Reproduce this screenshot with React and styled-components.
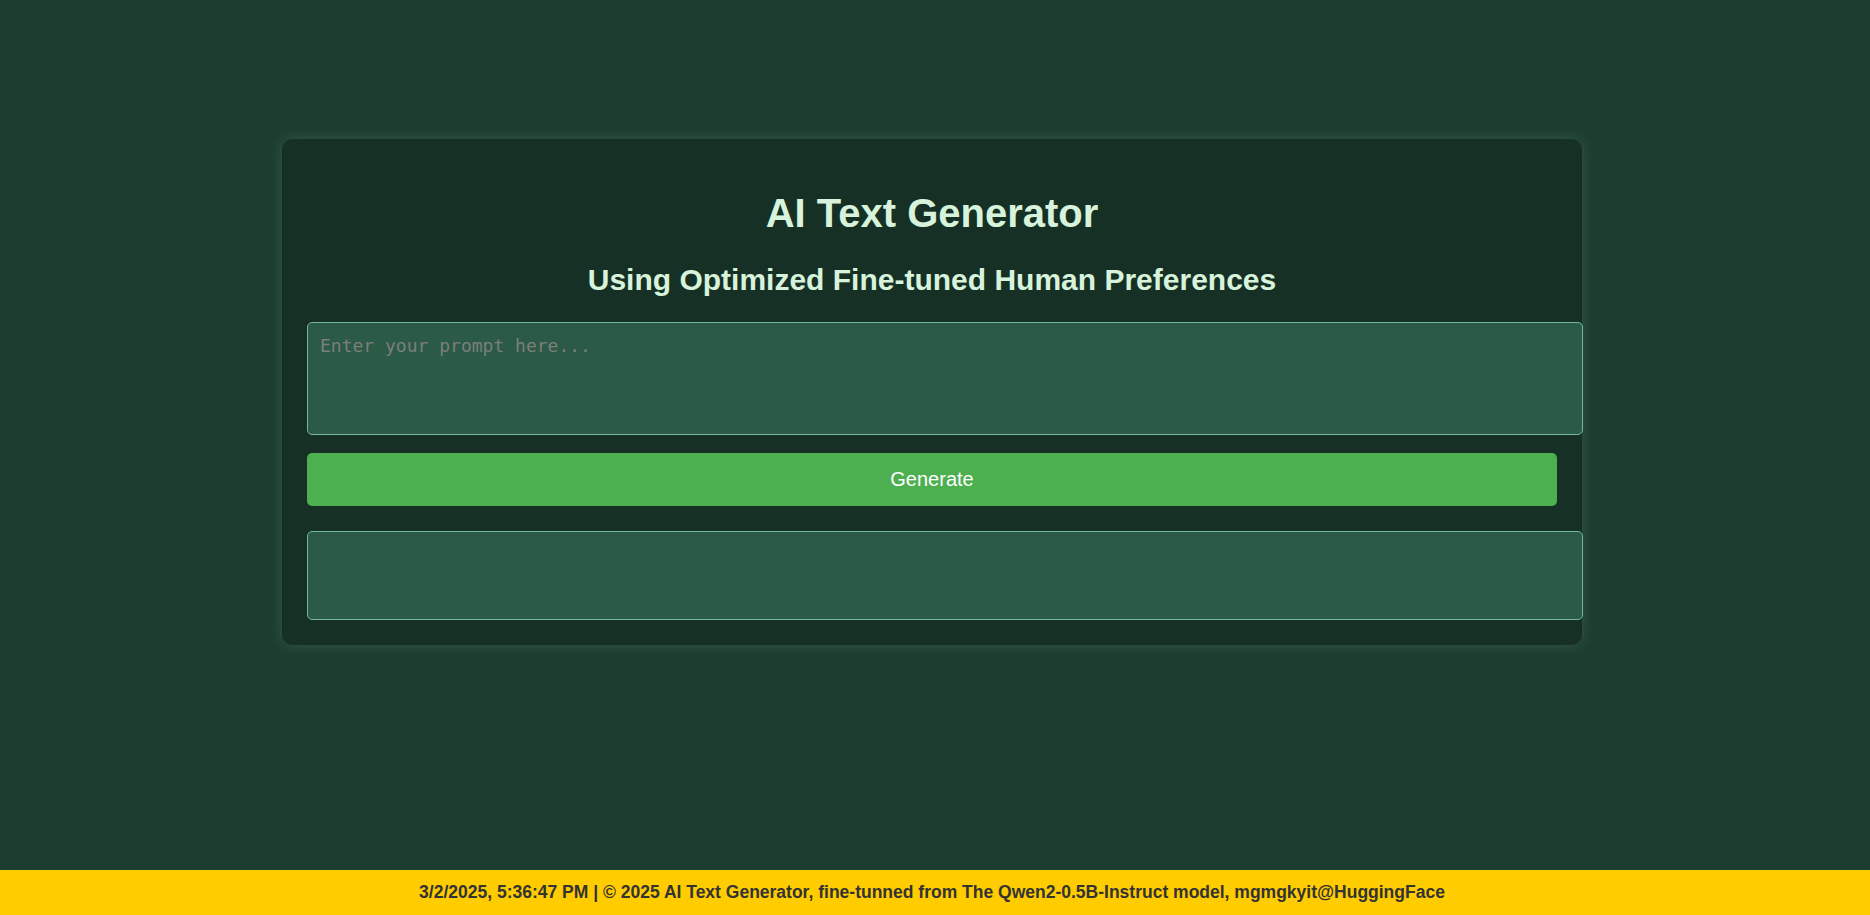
import { useState } from "react";
import styled, { createGlobalStyle } from "styled-components";

const GlobalStyle = createGlobalStyle`
  body {
    margin: 0;
    background-color: #1c3d30;
    font-family: "Liberation Sans", Arial, sans-serif;
  }
`;

const Page = styled.div`
  min-height: 100vh;
  display: flex;
  flex-direction: column;
`;

const Main = styled.main`
  flex: 1;
  padding: 139px 6px 0 0;
`;

const Card = styled.div`
  width: 1250px;
  margin: 0 auto;
  padding: 25px;
  background-color: #173026;
  border-radius: 10px;
  box-shadow: 0 0 14px rgba(190, 240, 210, 0.16);
`;

const Title = styled.h1`
  margin: 27px 0;
  font-size: 40px;
  font-weight: bold;
  text-align: center;
  color: #d8f3dc;
`;

const SubTitle = styled.h2`
  margin: 27px 0 25px;
  font-size: 30px;
  font-weight: bold;
  text-align: center;
  color: #d8f3dc;
`;

const PromptInput = styled.textarea`
  display: block;
  box-sizing: content-box;
  width: 100%;
  height: 87px;
  margin: 0;
  padding: 12px;
  border: 1px solid #74b89a;
  border-radius: 5px;
  background-color: #2b5a46;
  color: #d8f3dc;
  font-family: "DejaVu Sans Mono", "Liberation Mono", monospace;
  font-size: 18px;
  resize: none;
  outline: none;

  &::placeholder {
    color: #7b7f7c;
  }
`;

const GenerateButton = styled.button`
  display: block;
  width: 100%;
  margin-top: 18px;
  padding: 15px;
  border: none;
  border-radius: 5px;
  background-color: #4caf50;
  color: #ffffff;
  font-family: "Liberation Sans", Arial, sans-serif;
  font-size: 20px;
  cursor: pointer;

  &:hover {
    background-color: #45a049;
  }
`;

const Output = styled.div`
  box-sizing: content-box;
  width: 100%;
  min-height: 63px;
  margin-top: 25px;
  padding: 12px;
  border: 1px solid #74b89a;
  border-radius: 5px;
  background-color: #2b5a46;
  color: #d8f3dc;
  font-size: 16px;
  white-space: pre-wrap;
`;

const Footer = styled.footer`
  padding: 12px 18px 12px 12px;
  background-color: #ffcc00;
  color: #333333;
  font-size: 17.5px;
  font-weight: bold;
  text-align: center;
`;

const App = () => {
  const [prompt, setPrompt] = useState("");
  const [result, setResult] = useState("");

  const onGenerate = () => {
    // no backend here, just echo
    setResult(prompt);
  };

  return (
    <>
      <GlobalStyle />
      <Page>
        <Main>
          <Card>
            <Title>AI Text Generator</Title>
            <SubTitle>Using Optimized Fine-tuned Human Preferences</SubTitle>
            <PromptInput
              placeholder="Enter your prompt here..."
              value={prompt}
              onChange={(e) => setPrompt(e.target.value)}
            />
            <GenerateButton onClick={onGenerate}>Generate</GenerateButton>
            <Output>{result}</Output>
          </Card>
        </Main>
        <Footer>
          3/2/2025, 5:36:47 PM | © 2025 AI Text Generator, fine-tunned from The
          Qwen2-0.5B-Instruct model, mgmgkyit@HuggingFace
        </Footer>
      </Page>
    </>
  );
};

export default App;
